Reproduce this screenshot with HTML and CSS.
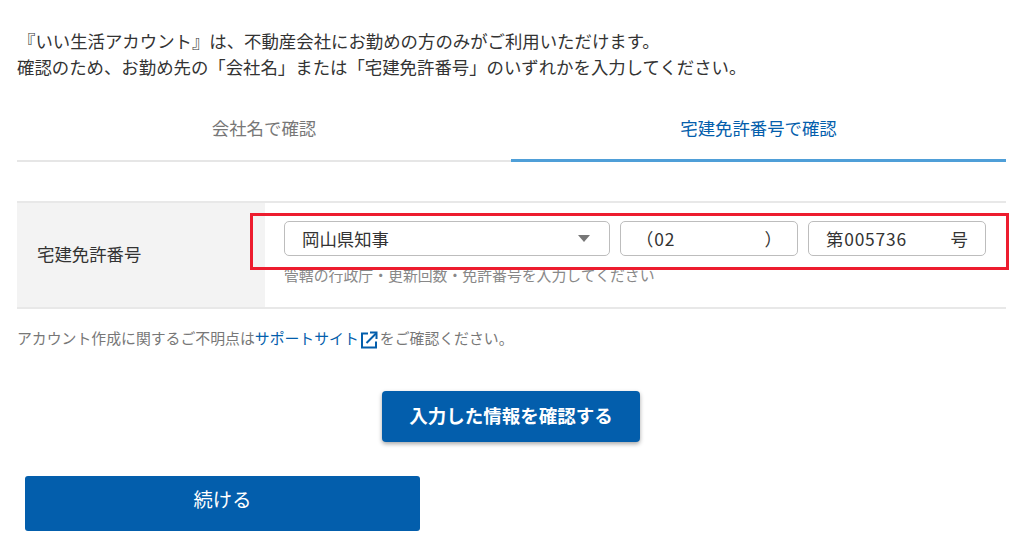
FILE: index.html
```html
<!DOCTYPE html>
<html lang="ja">
<head>
  <meta charset="UTF-8" />
  <meta name="viewport" content="width=device-width, initial-scale=1" />
  <title>いい生活アカウント</title>
  <link rel="stylesheet" href="styles.css">
</head>
<body>

  <div class="page">
    <p class="intro">
      <span class="intro-first">『いい生活アカウント』は、不動産会社にお勤めの方のみがご利用いただけます。</span><br>
      確認のため、お勤め先の「会社名」または「宅建免許番号」のいずれかを入力してください。
    </p>

    <nav class="tabs">
      <a href="#" class="tab">会社名で確認</a>
      <a href="#" class="tab active">宅建免許番号で確認</a>
    </nav>

    <div class="form-row">
      <div class="form-label">宅建免許番号</div>
      <div class="form-cell">
        <div class="fields">
          <div class="field field-select">
            <span>岡山県知事</span>
            <span class="caret"></span>
          </div>
          <div class="field field-small field-kai">
            <span class="num">（02</span>
            <span>）</span>
          </div>
          <div class="field field-small">
            <span class="num">第005736</span>
            <span>号</span>
          </div>
        </div>
        <p class="hint">管轄の行政庁・更新回数・免許番号を入力してください</p>
        <!-- annotation drawn on top of the screenshot -->
        <div class="highlight"></div>
      </div>
    </div>

    <p class="note">アカウント作成に関するご不明点は<a href="#">サポートサイト</a><svg class="ext" width="20" height="20" viewBox="0 0 20 20" fill="none" stroke="#035eac" stroke-width="2"><path d="M8 3.500H2v14h14v-6"/><path d="M6.500 13 16 3.500"/><path d="M10 2.500h6.500v6.500"/></svg>をご確認ください。</p>

    <div class="actions">
      <button class="btn-confirm" type="button">入力した情報を確認する</button>
    </div>

    <button class="btn-next" type="button">続ける</button>
  </div>

</body>
</html>
```

FILE: styles.css
```css
body {
  margin: 0;
  font-family: "Noto Sans CJK JP", "Noto Sans", sans-serif;
  background: #fff;
  color: #333;
}
p {
  margin: 0;
}
.page {
  padding: 28px 18px 0 17px;
}
.intro {
  font-size: 17.4px;
  line-height: 26px;
  color: #333;
}
.intro-first {
  margin-left: 1px;
}
.tabs {
  display: flex;
  margin-top: 18px;
}
.tab {
  flex: 1;
  height: 62px;
  line-height: 60px;
  text-align: center;
  font-size: 17.4px;
  color: #777;
  text-decoration: none;
  border-bottom: 2px solid #e6e6e6;
}
.tab:first-child {
  flex: none;
  width: 494px;
}
.tab.active {
  color: #035eac;
  border-bottom: 3px solid #4f9fd8;
  height: 61px;
}
.form-row {
  display: flex;
  margin-top: 39px;
  height: 104px;
  border-top: 2px solid #e8e8e8;
  border-bottom: 2px solid #e8e8e8;
}
.form-label {
  display: flex;
  align-items: center;
  width: 228px;
  padding: 0 0 4px 20px;
  background: #f3f3f3;
  font-size: 17.4px;
}
.form-cell {
  position: relative;
  flex: 1;
  padding: 18px 20px 0 19px;
}
.fields {
  display: flex;
  gap: 10px;
}
.field {
  display: flex;
  justify-content: space-between;
  align-items: center;
  box-sizing: border-box;
  height: 35px;
  padding: 0 17px;
  border: 1px solid #bdbdbd;
  border-radius: 5px;
  font-size: 17.4px;
}
.field-select {
  width: 326px;
  padding-right: 19px;
}
.field-small {
  width: 178px;
}
.field-kai {
  padding-left: 15px;
  padding-right: 15px;
}
.num {
  letter-spacing: 0.8px;
}
.caret {
  width: 0;
  height: 0;
  border-left: 6px solid transparent;
  border-right: 6px solid transparent;
  border-top: 7px solid #777;
}
.hint {
  margin-top: 8px;
  font-size: 14.87px;
  line-height: 22px;
  color: #888;
}
.highlight {
  position: absolute;
  left: -15px;
  top: 10px;
  right: -3px;
  height: 51px;
  border: 3px solid #ed1c2e;
  pointer-events: none;
}
.note {
  margin-top: 17px;
  height: 26px;
  line-height: 24px;
  font-size: 14.87px;
  color: #777;
}
.note a {
  color: #035eac;
  text-decoration: none;
}
.ext {
  margin-left: 1px;
  vertical-align: -6px;
}
.actions {
  display: flex;
  justify-content: center;
  margin-top: 39px;
}
button {
  font-family: inherit;
  background: #035eac;
  color: #fff;
  border: 0;
  padding: 0;
}
.btn-confirm {
  width: 258px;
  height: 51px;
  margin-right: 1px;
  padding-bottom: 3px;
  border-radius: 4px;
  font-size: 18.5px;
  font-weight: 700;
  box-shadow: 0 2px 4px rgba(0,0,0,0.35);
}
.btn-next {
  display: block;
  width: 395px;
  height: 55px;
  margin: 34px 0 0 8px;
  padding-bottom: 9px;
  border-radius: 3px;
  font-size: 19.3px;
}
```
